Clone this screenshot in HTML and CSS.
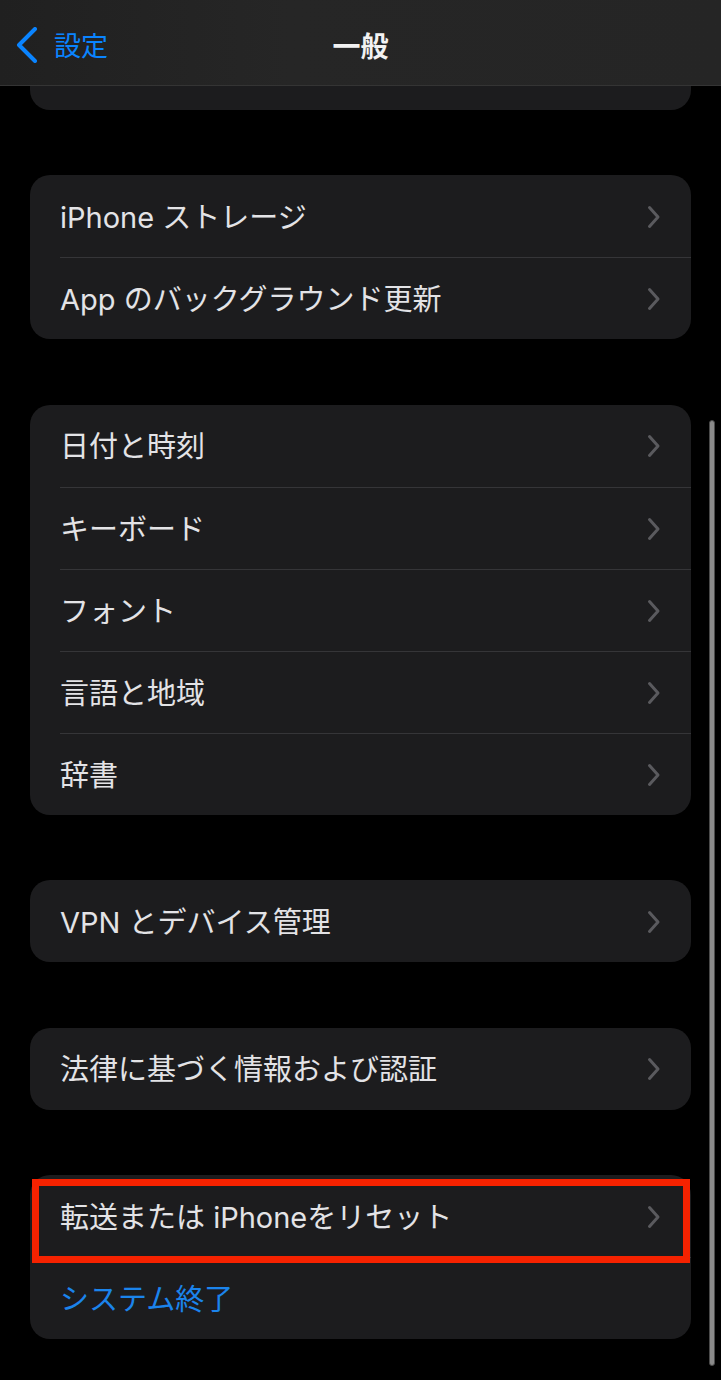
FILE: index.html
```html
<!DOCTYPE html>
<html lang="ja">
<head>
<meta charset="utf-8">
<link rel="stylesheet" href="styles.css">
</head>
<body>
<div class="screen">
  <header class="nav">
    <div class="back">
      <svg class="back-icon" width="22" height="36" viewBox="0 0 22 36"><path d="M19 2 L3 18 L19 34" fill="none" stroke="#0a84ff" stroke-width="4" stroke-linecap="round" stroke-linejoin="round"/></svg>
      <span class="back-label">設定</span>
    </div>
    <div class="title">一般</div>
  </header>

  <div class="list">
    <div class="card card-partial"></div>

    <div class="card">
      <div class="row"><div class="row-inner"><span class="label">iPhone ストレージ</span><svg class="chev" width="14" height="24" viewBox="0 0 14 24"><path d="M2.5 2.5 L11 12 L2.5 21.5" fill="none" stroke="#5a5a5e" stroke-width="3" stroke-linecap="round" stroke-linejoin="round"/></svg></div></div>
      <div class="row"><div class="row-inner sep"><span class="label">App のバックグラウンド更新</span><svg class="chev" width="14" height="24" viewBox="0 0 14 24"><path d="M2.5 2.5 L11 12 L2.5 21.5" fill="none" stroke="#5a5a5e" stroke-width="3" stroke-linecap="round" stroke-linejoin="round"/></svg></div></div>
    </div>

    <div class="card">
      <div class="row"><div class="row-inner"><span class="label">日付と時刻</span><svg class="chev" width="14" height="24" viewBox="0 0 14 24"><path d="M2.5 2.5 L11 12 L2.5 21.5" fill="none" stroke="#5a5a5e" stroke-width="3" stroke-linecap="round" stroke-linejoin="round"/></svg></div></div>
      <div class="row"><div class="row-inner sep"><span class="label">キーボード</span><svg class="chev" width="14" height="24" viewBox="0 0 14 24"><path d="M2.5 2.5 L11 12 L2.5 21.5" fill="none" stroke="#5a5a5e" stroke-width="3" stroke-linecap="round" stroke-linejoin="round"/></svg></div></div>
      <div class="row"><div class="row-inner sep"><span class="label">フォント</span><svg class="chev" width="14" height="24" viewBox="0 0 14 24"><path d="M2.5 2.5 L11 12 L2.5 21.5" fill="none" stroke="#5a5a5e" stroke-width="3" stroke-linecap="round" stroke-linejoin="round"/></svg></div></div>
      <div class="row"><div class="row-inner sep"><span class="label">言語と地域</span><svg class="chev" width="14" height="24" viewBox="0 0 14 24"><path d="M2.5 2.5 L11 12 L2.5 21.5" fill="none" stroke="#5a5a5e" stroke-width="3" stroke-linecap="round" stroke-linejoin="round"/></svg></div></div>
      <div class="row"><div class="row-inner sep"><span class="label">辞書</span><svg class="chev" width="14" height="24" viewBox="0 0 14 24"><path d="M2.5 2.5 L11 12 L2.5 21.5" fill="none" stroke="#5a5a5e" stroke-width="3" stroke-linecap="round" stroke-linejoin="round"/></svg></div></div>
    </div>

    <div class="card">
      <div class="row"><div class="row-inner"><span class="label">VPN とデバイス管理</span><svg class="chev" width="14" height="24" viewBox="0 0 14 24"><path d="M2.5 2.5 L11 12 L2.5 21.5" fill="none" stroke="#5a5a5e" stroke-width="3" stroke-linecap="round" stroke-linejoin="round"/></svg></div></div>
    </div>

    <div class="card">
      <div class="row"><div class="row-inner"><span class="label">法律に基づく情報および認証</span><svg class="chev" width="14" height="24" viewBox="0 0 14 24"><path d="M2.5 2.5 L11 12 L2.5 21.5" fill="none" stroke="#5a5a5e" stroke-width="3" stroke-linecap="round" stroke-linejoin="round"/></svg></div></div>
    </div>

    <div class="card card-last">
      <div class="row"><div class="row-inner"><span class="label">転送または iPhoneをリセット</span><svg class="chev" width="14" height="24" viewBox="0 0 14 24"><path d="M2.5 2.5 L11 12 L2.5 21.5" fill="none" stroke="#5a5a5e" stroke-width="3" stroke-linecap="round" stroke-linejoin="round"/></svg></div></div>
      <div class="row"><div class="row-inner sep"><span class="label blue">システム終了</span></div></div>
      <div class="highlight"></div>
    </div>
  </div>

  <div class="scrollbar"></div>
</div>
</body>
</html>
```

FILE: styles.css
```css
* { box-sizing: border-box; }
html, body {
  margin: 0;
  padding: 0;
  background: #000;
}
body {
  font-family: "Inter", "Noto Sans CJK JP", sans-serif;
  color: #e3e3e6;
}
.screen {
  position: relative;
  width: 721px;
  height: 1380px;
  overflow: hidden;
  background: #000;
}
.nav {
  position: relative;
  height: 86px;
  background: linear-gradient(90deg, #202020 0%, #262626 40%, #252525 100%);
  border-bottom: 1px solid #343434;
  display: flex;
  align-items: center;
  justify-content: center;
}
.back {
  position: absolute;
  left: 16px;
  top: 27px;
  display: flex;
  align-items: center;
  gap: 16px;
}
.back-icon { display: block; }
.back-label {
  font-family: "Noto Sans CJK JP", sans-serif;
  font-size: 27px;
  line-height: 36px;
  color: #0a84ff;
}
.title {
  font-family: "Noto Sans CJK JP", sans-serif;
  font-size: 28px;
  font-weight: 600;
  color: #f2f2f2;
  margin-top: 4px;
}
.list {
  display: flex;
  flex-direction: column;
  gap: 65.5px;
  padding: 0 30px;
}
.card {
  position: relative;
  background: #1c1c1e;
  border-radius: 20px;
}
.card-partial {
  height: 23.5px;
  border-radius: 0 0 20px 20px;
}
.row {
  height: 82px;
  padding-left: 30px;
}
.row-inner {
  height: 100%;
  display: flex;
  align-items: center;
  justify-content: space-between;
  padding-right: 30px;
}
.row-inner.sep {
  border-top: 1px solid #353538;
}
.label {
  font-size: 29px;
  line-height: 1;
  letter-spacing: 0;
  margin-top: 2px;
}
.blue { color: #1b84ec; }
.chev { display: block; margin-top: 1px; }
.highlight {
  position: absolute;
  left: 2px;
  top: 4px;
  width: 658px;
  height: 84px;
  border: 7px solid #f52200;
}
.scrollbar {
  position: absolute;
  left: 709px;
  top: 420px;
  width: 6px;
  height: 946px;
  border-radius: 3px;
  background: #8a8a8a;
  border: 1px solid #4a4a4a;
}
```
